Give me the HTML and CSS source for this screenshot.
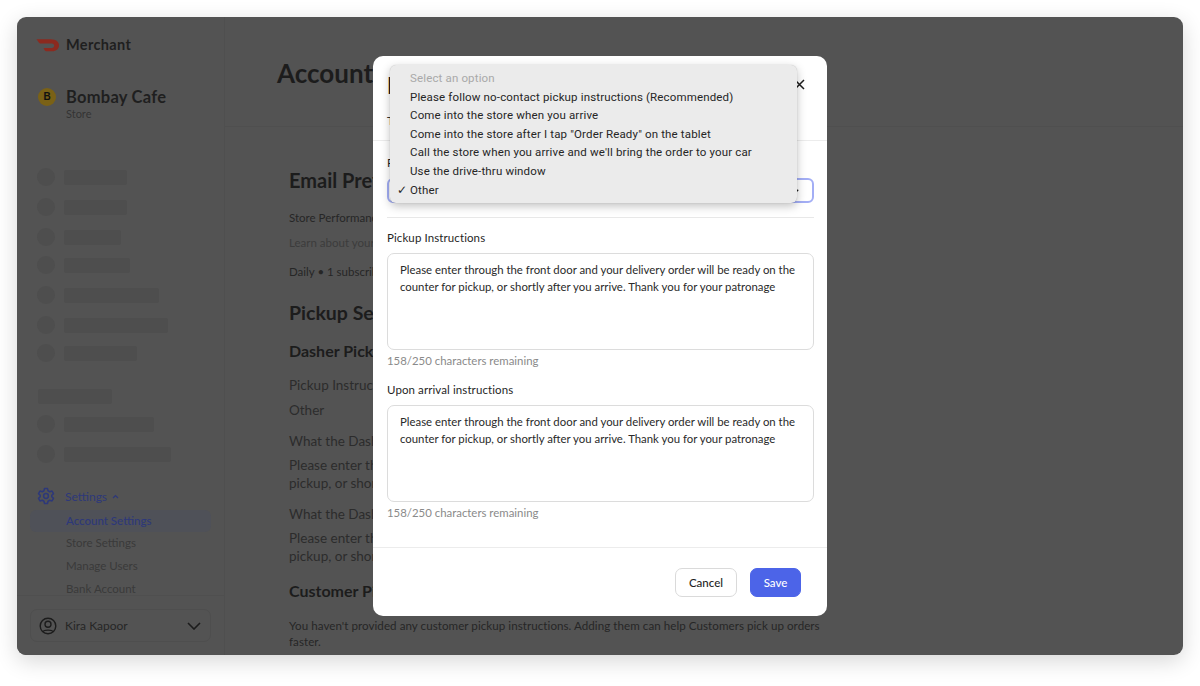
FILE: index.html
```html
<!DOCTYPE html>
<html lang="en">
<head>
<meta charset="utf-8">
<title>Merchant - Account Settings</title>
<link rel="stylesheet" href="styles.css">
</head>
<body>
<div class="window">
  <aside class="sidebar">
    <div class="brand">
      <svg class="brand-logo" width="24" height="14" viewBox="0 0 25 14"><path d="M0.5 1 H15.5 C21 1 24 4 24 7.5 C24 11 21 13.500 17 13.500 H10.500 C9.500 13.500 9 12.500 8.500 11.500 L7.800 10 H16.500 C18 10 19 9 19 7.800 C19 6.500 18 5.500 16.500 5.500 H5 C4 5.500 3.500 5 3 4.300 Z" fill="#8c2a1f"/></svg>
      <span class="brand-name">Merchant</span>
    </div>
    <div class="store">
      <span class="store-badge">B</span>
      <div>
        <div class="store-name">Bombay Cafe</div>
        <div class="store-type">Store</div>
      </div>
    </div>
    <nav class="skeleton-nav">
      <div class="sk-row"><i class="sk-dot"></i><i class="sk-bar w63"></i></div>
      <div class="sk-row"><i class="sk-dot"></i><i class="sk-bar w63"></i></div>
      <div class="sk-row tight"><i class="sk-dot"></i><i class="sk-bar w57"></i></div>
      <div class="sk-row"><i class="sk-dot"></i><i class="sk-bar w66"></i></div>
      <div class="sk-row"><i class="sk-dot"></i><i class="sk-bar w95"></i></div>
      <div class="sk-row tight"><i class="sk-dot"></i><i class="sk-bar w104"></i></div>
      <div class="sk-row"><i class="sk-dot"></i><i class="sk-bar w73"></i></div>
      <i class="sk-heading"></i>
      <div class="sk-row"><i class="sk-dot"></i><i class="sk-bar w90"></i></div>
      <div class="sk-row"><i class="sk-dot"></i><i class="sk-bar w107"></i></div>
    </nav>
    <div class="settings-head">
      <svg width="18" height="18" viewBox="0 0 24 24" fill="none" stroke="#2d387a" stroke-width="2" stroke-linejoin="round"><path d="M10 2 H14 L14.700 5 L17 6.300 L20 5.400 L22 8.800 L19.700 11 V13 L22 15.200 L20 18.600 L17 17.700 L14.700 19 L14 22 H10 L9.300 19 L7 17.700 L4 18.600 L2 15.200 L4.300 13 V11 L2 8.800 L4 5.400 L7 6.300 L9.300 5 Z"/><circle cx="12" cy="12" r="3.200"/></svg>
      <span>Settings</span>
      <svg width="7" height="5" viewBox="0 0 7 5" fill="none" stroke="#2d387a" stroke-width="1.200"><path d="M1 4 L3.500 1.500 L6 4"/></svg>
    </div>
    <ul class="sub-nav">
      <li class="current">Account Settings</li>
      <li>Store Settings</li>
      <li>Manage Users</li>
      <li>Bank Account</li>
    </ul>
    <div class="user-wrap">
      <div class="user">
        <svg width="18" height="18" viewBox="0 0 18 18" fill="none" stroke="#1c1c1c" stroke-width="1.400"><circle cx="9" cy="9" r="7.800"/><circle cx="9" cy="7.300" r="3"/><path d="M3.800 14.800 C5 12.500 13 12.500 14.200 14.800"/></svg>
        <span class="user-name">Kira Kapoor</span>
        <svg width="14" height="8" viewBox="0 0 14 8" fill="none" stroke="#1c1c1c" stroke-width="1.600"><path d="M1 1 L7 7 L13 1"/></svg>
      </div>
    </div>
  </aside>
  <main class="main">
    <header class="page-head"><h1>Account Settings</h1></header>
    <section class="content">
      <h2>Email Preferences</h2>
      <p class="pref-title">Store Performance Report</p>
      <p class="pref-desc">Learn about your store's performance</p>
      <p class="pref-meta">Daily • 1 subscriber</p>
      <h2 class="h-pickup">Pickup Settings</h2>
      <h3>Dasher Pickup</h3>
      <p class="field">Pickup Instructions</p>
      <p class="field">Other</p>
      <p class="field gap">What the Dasher sees</p>
      <p class="field para">Please enter through the front door and your delivery order will be ready for<br>pickup, or shortly after you arrive.</p>
      <p class="field gap">What the Dasher sees on arrival</p>
      <p class="field para">Please enter through the front door and your delivery order will be ready for<br>pickup, or shortly after you arrive.</p>
      <h2 class="h-customer">Customer Pickup</h2>
      <p class="note">You haven't provided any customer pickup instructions. Adding them can help Customers pick up orders faster.</p>
    </section>
  </main>

  <div class="modal">
    <div class="modal-head">
      <div class="modal-title">Edit Pickup Instructions</div>
      <svg class="close" width="11" height="11" viewBox="0 0 11 11" fill="none" stroke="#1c1c1c" stroke-width="1.500"><path d="M1 1 L10 10 M10 1 L1 10"/></svg>
      <p class="modal-sub">Tell Dashers how to pick up orders from your store</p>
    </div>
    <div class="modal-body">
      <div class="label first">Pickup method</div>
      <div class="select">Other<svg width="6" height="4" viewBox="0 0 6 4" fill="none" stroke="#1c1c1c" stroke-width="1.300"><path d="M0.800 0.800 L3 3 L5.200 0.800"/></svg></div>
      <hr class="rule">
      <div class="label">Pickup Instructions</div>
      <div class="textarea">Please enter through the front door and your delivery order will be ready on the counter for pickup, or shortly after you arrive. Thank you for your patronage</div>
      <div class="count">158/250 characters remaining</div>
      <div class="label second">Upon arrival instructions</div>
      <div class="textarea">Please enter through the front door and your delivery order will be ready on the counter for pickup, or shortly after you arrive. Thank you for your patronage</div>
      <div class="count">158/250 characters remaining</div>
    </div>
    <div class="modal-foot">
      <button class="btn">Cancel</button>
      <button class="btn primary">Save</button>
    </div>
    <ul class="menu">
      <li class="muted">Select an option</li>
      <li>Please follow no-contact pickup instructions (Recommended)</li>
      <li>Come into the store when you arrive</li>
      <li>Come into the store after I tap "Order Ready" on the tablet</li>
      <li>Call the store when you arrive and we'll bring the order to your car</li>
      <li>Use the drive-thru window</li>
      <li class="checked">Other</li>
    </ul>
  </div>
</div>
</body>
</html>
```

FILE: styles.css
```css
* { box-sizing: border-box; }
html, body { margin: 0; height: 100%; }
body {
  background: #fff;
  padding: 17px;
  height: 686px;
  overflow: hidden;
  font-family: "Lato", "Liberation Sans", sans-serif;
  color: #1c1c1c;
}
p, h1, h2, h3, ul { margin: 0; padding: 0; }
ul { list-style: none; }
i { display: block; }

.window {
  position: relative;
  width: 1166px;
  height: 638px;
  background: #535353;
  border-radius: 9px;
  display: flex;
  overflow: hidden;
}
body::before {
  content: "";
  position: absolute;
  left: 17px; top: 17px;
  width: 1166px; height: 638px;
  border-radius: 9px;
  box-shadow: 0 6px 22px rgba(0,0,0,.16);
}

/* sidebar */
.sidebar {
  width: 208px;
  flex: none;
  border-right: 1px solid #4f4f4f;
  display: flex;
  flex-direction: column;
  padding-top: 20px;
  position: relative;
}
.brand { display: flex; align-items: center; gap: 6px; padding-left: 19px; height: 15px; }
.brand-name { font-size: 14.500px; font-weight: 700; color: #1f1f1f; letter-spacing: .35px; }
.store { display: flex; align-items: flex-start; gap: 10px; padding: 35px 0 0 21px; height: 89px; }
.store-badge {
  width: 18px; height: 18px; border-radius: 50%;
  background: #7a6116; color: #111;
  font-size: 10px; font-weight: 700; text-align: center; line-height: 18px;
  font-family: "Liberation Sans", sans-serif;
  margin-top: 1px;
}
.store-name { font-size: 16.500px; font-weight: 700; color: #1f1f1f; line-height: 20px; letter-spacing: .25px; }
.store-type { font-size: 11px; color: #333; line-height: 13px; }

.skeleton-nav { padding: 27px 0 0 20px; display: flex; flex-direction: column; }
.sk-row { display: flex; align-items: center; gap: 9px; height: 18px; margin-bottom: 12px; }
.sk-row.tight { margin-bottom: 10px; }
.sk-dot { width: 18px; height: 18px; border-radius: 50%; background: #4e4e4e; }
.sk-bar { height: 15px; background: #4e4e4e; border-radius: 2px; }
.sk-heading { width: 74px; height: 15px; margin: 15px 0 11px 1px; background: #4e4e4e; border-radius: 2px; }
.w57 { width: 57px; } .w63 { width: 63px; } .w66 { width: 66px; } .w73 { width: 73px; }
.w90 { width: 90px; } .w95 { width: 95px; } .w104 { width: 104px; } .w107 { width: 107px; }

.settings-head {
  display: flex; align-items: center; gap: 5px;
  padding-left: 20px; height: 18px; margin-top: 12px;
  font-size: 12px; color: #2d387a;
}
.settings-head span { margin-left: 5px; }
.sub-nav { margin: 5px 0 0 13px; width: 181px; font-size: 11.500px; color: #3a3a3a; }
.sub-nav li { height: 23px; line-height: 22px; padding-left: 36px; border-radius: 6px; white-space: nowrap; }
.sub-nav li.current { color: #2d387a; background: #4f5158; font-weight: 500; height: 22px; }

.user-wrap {
  position: absolute; left: 0; right: 0; bottom: 0; height: 60px;
  background: #535353; border-top: 1px solid #4f4f4f;
  padding: 13px 13px 0;
}
.user {
  height: 33px; border: 1px solid #4e4e4e; border-radius: 7px;
  display: flex; align-items: center; padding: 0 9px 0 8px;
}
.user-name { font-size: 12px; color: #262626; margin-left: 8px; flex: 1; }

/* main */
.main { flex: 1; min-width: 0; }
.page-head { height: 110px; border-bottom: 1px solid #4f4f4f; padding: 41px 0 0 52px; }
h1 { font-size: 26px; font-weight: 700; color: #1c1c1c; line-height: 30px; }
.content { padding: 41px 0 0 65px; width: 615px; }
h2 { font-size: 20px; font-weight: 700; color: #1c1c1c; line-height: 24px; margin-left: -1px; }
.pref-title { font-size: 11.500px; color: #262626; line-height: 14px; margin-top: 19px; margin-left: -1px; }
.pref-desc { font-size: 11.500px; color: #3c3c3c; line-height: 14px; margin-top: 11px; margin-left: -1px; }
.pref-meta { font-size: 11.500px; color: #262626; line-height: 14px; margin-top: 15px; margin-left: -1px; }
.h-pickup { margin-top: 22px; font-size: 19.500px; }
h3 { font-size: 16px; font-weight: 700; color: #1c1c1c; line-height: 20px; margin-top: 16px; margin-left: -1px; }
.field { font-size: 13.500px; color: #2c2c2c; line-height: 18px; white-space: nowrap; margin-left: -1px; }
.h-pickup + h3 + .field { margin-top: 15px; }
.field + .field { margin-top: 7px; }
.field.gap { margin-top: 13px; }
.field.para { margin-top: 6px; }
.h-customer { font-size: 16px; margin-top: 16px; line-height: 20px; }
.note { font-size: 11.600px; letter-spacing: .05px; color: #262626; line-height: 16px; margin-top: 17px; margin-left: -1px; }

/* modal */
.modal {
  position: absolute; left: 356px; top: 39px;
  width: 454px; height: 560px;
  background: #fff; border-radius: 10px;
  display: flex; flex-direction: column;
}
.modal-head { height: 85px; border-bottom: 1px solid #ececec; padding: 17px 14px 0; position: relative; }
.modal-title { font-size: 22px; font-weight: 700; line-height: 26px; white-space: nowrap; overflow: hidden; color: #1c1c1c; }
.modal-sub { font-size: 12px; line-height: 14px; margin-top: 15px; color: #333; white-space: nowrap; }
.close { position: absolute; top: 23px; right: 22px; }
.modal-body { flex: 1; padding: 15px 13px 0 14px; }
.label { font-size: 11.500px; line-height: 14px; color: #1f1f1f; letter-spacing: .1px; }
.label.second { margin-top: 15px; }
.select {
  height: 25px; margin-top: 8px;
  border: 2px solid #a3aef5; border-radius: 6px;
  display: flex; align-items: center; justify-content: space-between;
  padding: 0 13px; font-size: 12px;
}
.rule { border: 0; border-top: 1px solid #e8e8e8; margin: 14px 0 13px; }
.textarea {
  height: 97px; margin-top: 8px;
  border: 1px solid #dcdcdc; border-radius: 7px;
  padding: 8px 13px 8px 12px;
  font-size: 11.380px; line-height: 16.500px; color: #2a2a2a;
}
.count { font-size: 11.400px; line-height: 14px; color: #8a8a8a; margin-top: 4px; }
.modal-foot {
  height: 69px; border-top: 1px solid #ececec;
  display: flex; justify-content: flex-end; align-items: flex-start; gap: 13px;
  padding: 20px 26px 0 0;
}
.btn {
  height: 29px; width: 62px; border-radius: 7px;
  border: 1px solid #dadada; background: #fff;
  font: 500 11.500px "Lato", "Liberation Sans", sans-serif; color: #1f1f1f;
}
.btn.primary { width: 51px; background: #4c64e8; border-color: #4c64e8; color: #fff; }

.menu {
  position: absolute; left: 17px; top: 9px;
  width: 407px; height: 138px;
  background: #ebebeb; border-radius: 6px;
  padding: 4px 0 0 20px;
  box-shadow: 0 3px 10px rgba(0,0,0,.25), 0 0 1px rgba(0,0,0,.25);
  font: 11.500px/18.600px "Roboto", "Liberation Sans", sans-serif;
  color: #262626;
  letter-spacing: .15px;
}
.menu li { white-space: nowrap; position: relative; }
.menu .muted { color: #a9a9a9; }
.menu .checked::before { content: "✓"; position: absolute; left: -13px; font-size: 12px; font-family: "DejaVu Sans", sans-serif; font-weight: 700; }
```
